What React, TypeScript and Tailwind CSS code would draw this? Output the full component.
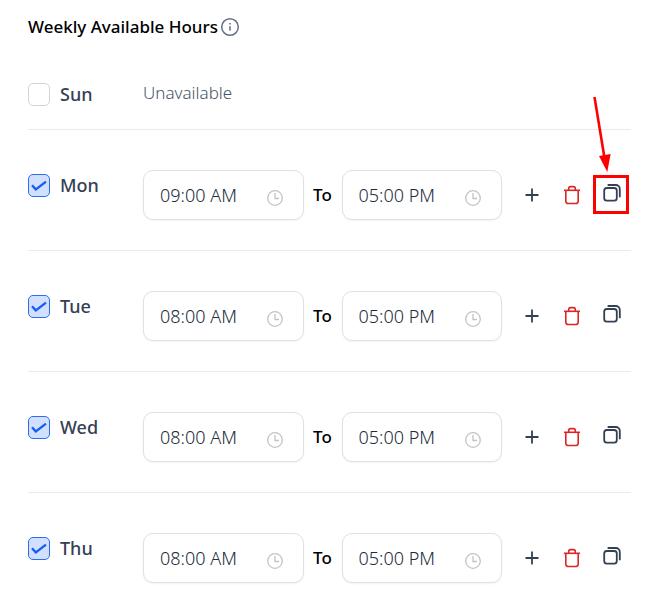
import { useState } from "react";
import { clsx } from "clsx";

interface DayHours {
  day: string;
  enabled: boolean;
  start: string;
  end: string;
  highlightCopy?: boolean;
}

const initialHours: DayHours[] = [
  { day: "Sun", enabled: false, start: "", end: "" },
  { day: "Mon", enabled: true, start: "09:00 AM", end: "05:00 PM", highlightCopy: true },
  { day: "Tue", enabled: true, start: "08:00 AM", end: "05:00 PM" },
  { day: "Wed", enabled: true, start: "08:00 AM", end: "05:00 PM" },
  { day: "Thu", enabled: true, start: "08:00 AM", end: "05:00 PM" },
];

function InfoIcon() {
  return (
    <svg viewBox="0 0 20 20" className="h-5 w-5 text-[#667085]" fill="none" stroke="currentColor">
      <circle cx="10" cy="10" r="8.3" strokeWidth="1.5" />
      <path d="M10 9.2v4.3" strokeWidth="1.6" />
      <path d="M10 6v1.6" strokeWidth="1.6" />
    </svg>
  );
}

function ClockIcon() {
  return (
    <svg viewBox="0 0 16 16" className="h-4 w-4 shrink-0 text-[#c3c3c3]" fill="none" stroke="currentColor">
      <circle cx="8" cy="8" r="7.3" strokeWidth="1.3" />
      <path d="M8 3v5.5h4" strokeWidth="1.3" />
    </svg>
  );
}

function PlusIcon() {
  return (
    <svg viewBox="0 0 20 20" className="h-5 w-5 text-[#344054]" fill="none" stroke="currentColor" strokeWidth="1.8">
      <path d="M10 3.5v13M3.5 10h13" />
    </svg>
  );
}

function TrashIcon() {
  return (
    <svg viewBox="0 0 20 20" className="h-5 w-5 text-[#dc2626]" fill="none" stroke="currentColor" strokeWidth="1.6">
      <path d="M2 5.3h16" />
      <path d="M3.8 5.3v10.9a2.3 2.3 0 0 0 2.3 2.3h7.8a2.3 2.3 0 0 0 2.3-2.3V5.3" />
      <path d="M6.7 5.3V3.6a2 2 0 0 1 2-2h2.6a2 2 0 0 1 2 2v1.7" />
    </svg>
  );
}

function CopyIcon() {
  return (
    <svg viewBox="0 0 20 20" className="h-5 w-5 text-[#344054]" fill="none" stroke="currentColor" strokeWidth="1.8">
      <rect x="2.2" y="5" width="12.6" height="12.6" rx="2.6" />
      <path d="M5.6 2h8.2a4 4 0 0 1 4 4v8.2" />
    </svg>
  );
}

function CopyCallout() {
  return (
    <>
      <span className="pointer-events-none absolute -top-0.5 -bottom-px left-0 w-9 border-3 border-[#fe0000]" />
      <svg
        viewBox="0 0 24 80"
        className="pointer-events-none absolute -top-20 left-0 h-20 w-6 text-[#fe0000]"
        aria-hidden="true"
      >
        <path d="M1.5 0 11.5 61" fill="none" stroke="currentColor" strokeWidth="2.6" />
        <path d="M6 59 17.6 57 14.3 75z" fill="currentColor" />
      </svg>
    </>
  );
}

interface TimeFieldProps {
  label: string;
  value: string;
  onChange: (value: string) => void;
}

function TimeField({ label, value, onChange }: TimeFieldProps) {
  return (
    <div className="flex h-[50px] min-w-0 flex-1 items-center rounded-[10px] border border-[#dfe0e8] bg-white pr-5 pl-4 shadow-xs">
      <input
        type="text"
        aria-label={label}
        value={value}
        onChange={(e) => onChange(e.target.value)}
        className="w-full min-w-0 bg-transparent text-lg font-light text-[#222b3a] outline-none"
      />
      <span className="mt-1.5">
        <ClockIcon />
      </span>
    </div>
  );
}

interface DayRowProps {
  item: DayHours;
  onChange: (patch: Partial<DayHours>) => void;
}

function DayRow({ item, onChange }: DayRowProps) {
  return (
    <li
      className={clsx(
        "flex items-start border-b border-[#eaeaec] last:border-b-0 last:pb-0",
        item.enabled ? "pt-10 pb-[30px]" : "pt-[39px] pb-[21px]"
      )}
    >
      <label className={clsx("flex w-[115px] shrink-0 items-center gap-2.5", item.enabled && "pt-px")}>
        <span className="grid h-[23px] w-[22px] shrink-0">
          <input
            type="checkbox"
            checked={item.enabled}
            onChange={(e) => onChange({ enabled: e.target.checked })}
            className="peer col-start-1 row-start-1 appearance-none rounded-[5px] border border-[#d0d5dd] bg-white checked:border-[#2f6df0] checked:bg-[#d1e0ff]"
          />
          <svg
            viewBox="0 0 22 23"
            className="pointer-events-none invisible col-start-1 row-start-1 text-[#155eef] peer-checked:visible"
            fill="none"
            stroke="currentColor"
            strokeWidth="2.3"
          >
            <path d="M4 11.3 7.8 15.4 18 7.6" />
          </svg>
        </span>
        <span className="text-lg font-medium text-[#344054]">{item.day}</span>
      </label>

      {item.enabled ? (
        <div className="flex min-w-0 flex-1 items-center">
          <TimeField
            label={`${item.day} start`}
            value={item.start}
            onChange={(start) => onChange({ start })}
          />
          <span className="w-[38px] text-center text-[17px] font-medium text-black">To</span>
          <TimeField
            label={`${item.day} end`}
            value={item.end}
            onChange={(end) => onChange({ end })}
          />
          <div className="ml-[11px] flex gap-0.5">
            <button type="button" aria-label="Add hours" className="flex h-9 w-[38px] items-center justify-center">
              <PlusIcon />
            </button>
            <button type="button" aria-label="Remove hours" className="flex h-9 w-[38px] items-center justify-center">
              <TrashIcon />
            </button>
            <button
              type="button"
              aria-label="Copy hours"
              className="relative flex h-9 w-[38px] justify-center pt-1.5"
            >
              <CopyIcon />
              {item.highlightCopy && <CopyCallout />}
            </button>
          </div>
        </div>
      ) : (
        <p className="text-[17px] leading-[26px] font-light text-[#475467]">Unavailable</p>
      )}
    </li>
  );
}

export default function App() {
  const [hours, setHours] = useState(initialHours);

  const updateDay = (day: string, patch: Partial<DayHours>) => {
    setHours((prev) => prev.map((h) => (h.day === day ? { ...h, ...patch } : h)));
  };

  return (
    <main className="bg-white pt-[13px] pr-4 pb-3 pl-7 font-['Noto_Sans',sans-serif]">
      <div className="flex items-center gap-0.5">
        <h1 className="text-[17px] leading-7 font-medium text-black">Weekly Available Hours</h1>
        <InfoIcon />
      </div>
      <ul>
        {hours.map((item) => (
          <DayRow key={item.day} item={item} onChange={(patch) => updateDay(item.day, patch)} />
        ))}
      </ul>
    </main>
  );
}
